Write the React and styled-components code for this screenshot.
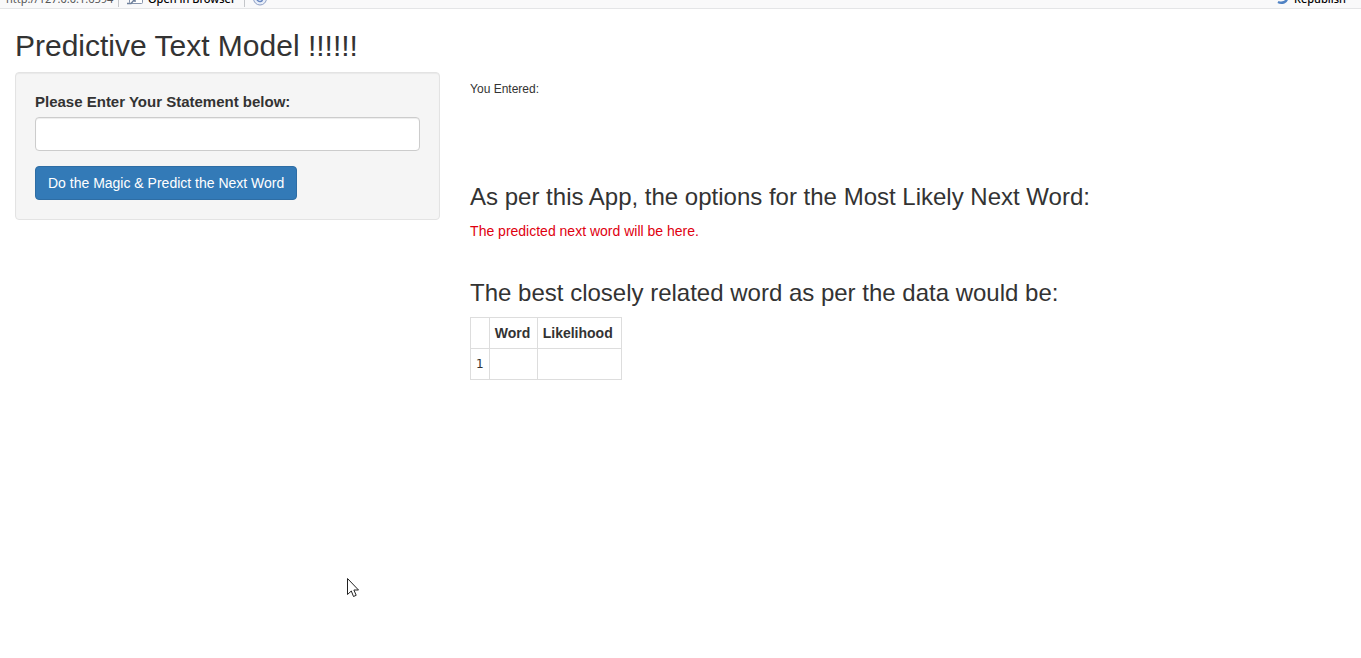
import React from "react";
import styled, { createGlobalStyle } from "styled-components";

const GlobalStyle = createGlobalStyle`
  *, *::before, *::after { box-sizing: border-box; }
  body {
    margin: 0;
    background: #fff;
    color: #333;
    font: 14px/20px "Liberation Sans", Arial, sans-serif;
  }
`;

const Toolbar = styled.header`
  display: flex;
  align-items: flex-end;
  justify-content: space-between;
  height: 9px;
  padding: 0 15px 0 6px;
  overflow: hidden;
  background: #f9f9fa;
  border-bottom: 1px solid #e4e5e7;
  font: 11px/16px "Noto Sans", sans-serif;
`;

const ToolGroup = styled.div`
  display: flex;
  align-items: center;
  flex: none;
  height: 18px;
`;

const Address = styled.span`
  width: 112px;
  color: #555;
`;

const Divider = styled.span`
  width: 1px;
  height: 16px;
  margin-right: 7px;
  background: #c4c6ca;
`;

const ToolButton = styled.button`
  display: flex;
  align-items: center;
  gap: 4px;
  height: 16px;
  margin: 0 8px 0 0;
  padding: 0;
  border: 0;
  background: none;
  color: #000;
  font: inherit;
  font-weight: 500;

  &:last-child { margin-right: 0; }
  svg { flex: none; display: block; }
`;

const Page = styled.main`
  padding: 20px 15px;
`;

const Title = styled.h2`
  margin: 0 0 10px;
  font-size: 30px;
  font-weight: 400;
  line-height: 33px;
`;

const Columns = styled.div`
  display: grid;
  grid-template-columns: 33fr 68fr;
  column-gap: 30px;
  align-items: start;
`;

const Well = styled.form`
  padding: 19px;
  background: #f5f5f5;
  border: 1px solid #e3e3e3;
  border-radius: 4px;
  box-shadow: inset 0 1px 1px rgba(0, 0, 0, 0.05);
`;

const Label = styled.label`
  display: block;
  margin-bottom: 5px;
  font-size: 15px;
  font-weight: 700;
`;

const TextBox = styled.input`
  display: block;
  width: 100%;
  height: 34px;
  margin-bottom: 15px;
  padding: 6px 12px;
  background: #fff;
  border: 1px solid #ccc;
  border-radius: 4px;
  box-shadow: inset 0 1px 1px rgba(0, 0, 0, 0.075);
  color: #555;
  font: inherit;
`;

const PrimaryButton = styled.button`
  display: block;
  height: 34px;
  padding: 6px 12px;
  background: #337ab7;
  border: 1px solid #2e6da4;
  border-radius: 4px;
  color: #fff;
  font: inherit;
`;

const Results = styled.section`
  padding-top: 10px;
`;

const Entered = styled.h6`
  min-height: 102px;
  margin: 0;
  font-size: 12px;
  font-weight: 400;
  line-height: 14px;
`;

const Heading = styled.h3`
  margin: 0 0 11px;
  font-size: 24px;
  font-weight: 400;
  line-height: 26px;
`;

const Prediction = styled.p`
  min-height: 59px;
  margin: 0;
  color: #e0000f;
`;

const Table = styled.table`
  border-collapse: collapse;

  th, td {
    height: 31px;
    padding: 5px;
    border: 1px solid #ddd;
    text-align: left;
  }
  tbody th {
    font: 12px/20px "DejaVu Sans", sans-serif;
  }
`;

const ColumnHead = styled.th`
  min-width: ${({ $width }) => $width}px;
`;

const Pointer = styled.svg`
  position: absolute;
  left: 347px;
  top: 578px;
  pointer-events: none;
`;

export default function App() {
  return (
    <>
      <GlobalStyle />
      <Toolbar>
        <ToolGroup>
          <Address>http://127.0.0.1:6594</Address>
          <Divider />
          <ToolButton type="button">
            <svg width="18" height="16" viewBox="0 0 18 16" fill="none">
              <rect x="3.5" y="1.5" width="13" height="11" rx="1" fill="#fff" stroke="#8795ad" />
              <path d="M4 4H16" stroke="#8ca9d0" strokeWidth="2" />
              <path d="M1 12.5H5L9 8M5 7H9V11" stroke="#6f819c" strokeWidth="1.5" />
            </svg>
            Open in Browser
          </ToolButton>
          <Divider />
          <ToolButton type="button" aria-label="Refresh">
            <svg width="16" height="16" viewBox="0 0 16 16" fill="none">
              <circle cx="8" cy="7.5" r="6.5" fill="#e8eef9" stroke="#8e9fc5" />
              <path d="M10.5 6A3 3 0 1 0 10.5 9M10.5 3V6H7.5" stroke="#6686c1" strokeWidth="1.5" />
            </svg>
          </ToolButton>
        </ToolGroup>
        <ToolGroup>
          <ToolButton type="button">
            <svg width="14" height="16" viewBox="0 0 14 16" fill="none">
              <path d="M2 5C4 0 11 2 11 7C11 11 6 13 2 11" stroke="#4f82c4" strokeWidth="2.5" />
              <path d="M4 7H0V3" fill="#4f82c4" />
            </svg>
            Republish
          </ToolButton>
        </ToolGroup>
      </Toolbar>
      <Page>
        <Title>Predictive Text Model !!!!!!</Title>
        <Columns>
          <Well onSubmit={(event) => event.preventDefault()}>
            <Label htmlFor="statement">Please Enter Your Statement below:</Label>
            <TextBox id="statement" type="text" />
            <PrimaryButton type="submit">Do the Magic &amp; Predict the Next Word</PrimaryButton>
          </Well>
          <Results>
            <Entered>You Entered:</Entered>
            <Heading>As per this App, the options for the Most Likely Next Word:</Heading>
            <Prediction>The predicted next word will be here.</Prediction>
            <Heading>The best closely related word as per the data would be:</Heading>
            <Table>
              <thead>
                <tr>
                  <th />
                  <ColumnHead scope="col" $width={48}>Word</ColumnHead>
                  <ColumnHead scope="col" $width={84}>Likelihood</ColumnHead>
                </tr>
              </thead>
              <tbody>
                <tr>
                  <th scope="row">1</th>
                  <td />
                  <td />
                </tr>
              </tbody>
            </Table>
          </Results>
        </Columns>
      </Page>
      <Pointer width="13" height="20" viewBox="0 0 13 20" aria-hidden="true">
        <path d="M.5.5V16.5L4.3 13L6.5 18.5L9.2 17.3L6.9 12H11.5Z" fill="#fff" stroke="#222" />
      </Pointer>
    </>
  );
}
